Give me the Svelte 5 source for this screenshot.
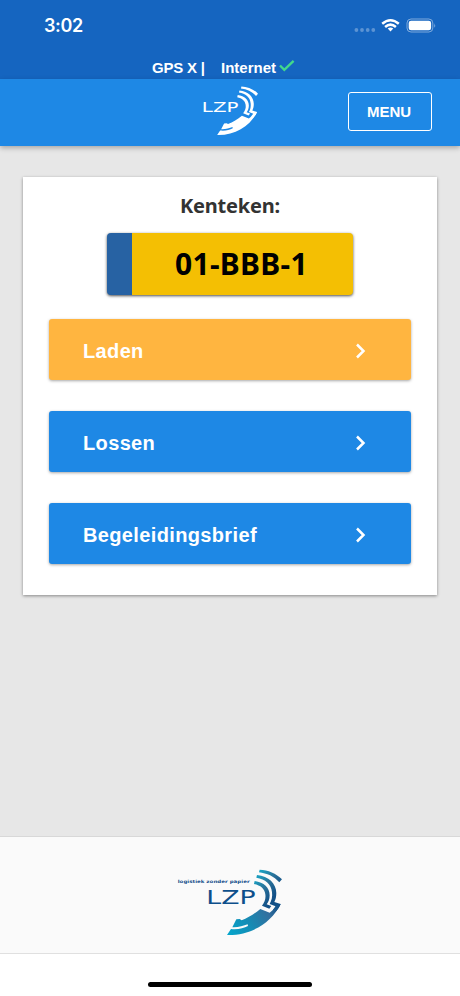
<script>
  const actions = [
    { label: 'Laden', tone: 'amber' },
    { label: 'Lossen', tone: 'blue' },
    { label: 'Begeleidingsbrief', tone: 'blue' }
  ];
</script>

{#snippet logo(full)}
  <svg class={full ? 'logo full' : 'logo white'} viewBox="36 40 318 202" role="img" aria-label="LZP">
    <defs>
      <linearGradient id="sea" gradientUnits="userSpaceOnUse" x1="190" y1="235" x2="345" y2="145">
        <stop offset="0" stop-color="#05a5cb" />
        <stop offset=".4" stop-color="#168bb4" />
        <stop offset=".75" stop-color="#336f9e" />
        <stop offset="1" stop-color="#0c4b83" />
      </linearGradient>
      <linearGradient id="arc" gradientUnits="userSpaceOnUse" x1="268" y1="60" x2="335" y2="110">
        <stop offset="0" stop-color="#16a8c8" />
        <stop offset=".55" stop-color="#2a7299" />
        <stop offset="1" stop-color="#125087" />
      </linearGradient>
    </defs>
    {#if full}
      <text class="tagline" x="38" y="82" textLength="216" lengthAdjust="spacingAndGlyphs">logistiek zonder papier</text>
    {/if}
    <text class="name" x="124" y="146" textLength="148" lengthAdjust="spacingAndGlyphs">LZP</text>
    <g fill={full ? 'url(#arc)' : '#fff'}>
      <path d="M284 42C309 43 334 53 351 71L343 80C327 62 306 53 282 50Z" />
      <path d="M276 58C311 61 334 84 334 112C334 123 332 132 328 139L347 145C344 154 338 162 332 168L324 162L332 152L314 145C320 135 323 123 321 109C319 85 301 70 274 66Z" />
      <path d="M269 76C297 80 314 96 314 119C314 131 310 140 305 146L319 151L313 159L291 150C299 140 303 130 301 116C299 99 287 89 267 85Z" />
    </g>
    <path
      fill={full ? 'url(#sea)' : '#fff'}
      d="M347 145C319 202 258 240 186 238L198 220C219 222 236 218 249 211L248 206C235 211 219 216 202 215L214 191L224 190L230 194C249 187 269 174 286 160L314 171C323 165 329 158 332 152L340 146Z"
    />
  </svg>
{/snippet}

<div class="screen">
  <div class="status">
    <div class="system">
      <span class="time">3:02</span>
      <svg class="indicators" viewBox="0 0 84 18" aria-hidden="true">
        <g fill="#fff" opacity=".3">
          <circle cx="4.4" cy="12" r="1.9" /><circle cx="10" cy="12" r="1.9" />
          <circle cx="15.7" cy="12" r="1.9" /><circle cx="21.3" cy="12" r="1.9" />
        </g>
        <g fill="none" stroke="#fff" stroke-width="2.5">
          <path d="M30.2 5.8Q38.5-1.4 46.8 5.8" />
          <path d="M33.1 9Q38.5 4.3 43.9 9" />
        </g>
        <path d="M35.7 10.5Q38.5 8.4 41.3 10.5L38.5 13.4Z" fill="#fff" />
        <rect x="55" y="1" width="25.8" height="13" rx="4" fill="none" stroke="#fff" stroke-opacity=".45" />
        <rect x="56.7" y="2.7" width="22.4" height="9.6" rx="2.4" fill="#fff" />
        <path d="M82.3 5.2Q84 7.5 82.3 9.8Z" fill="#fff" opacity=".5" />
      </svg>
    </div>
    <div class="connection">
      <span class="gps">GPS X |</span>
      <span class="net">Internet</span>
      <svg class="check" viewBox="0 0 16 13" aria-hidden="true">
        <path d="M1 5.5L5.3 9.8L14.6 .9" fill="none" stroke="#43d98b" stroke-width="2.3" />
      </svg>
    </div>
  </div>

  <header>
    {@render logo(false)}
    <button class="menu">MENU</button>
  </header>

  <main>
    <section class="card">
      <h1>Kenteken:</h1>
      <div class="plate"><span>01-BBB-1</span></div>
      {#each actions as action}
        <button class="action {action.tone}">
          <span>{action.label}</span>
          <svg viewBox="0 0 12 16" aria-hidden="true">
            <path d="M2 1.5L8.5 8L2 14.5" fill="none" stroke="#fff" stroke-width="2.5" />
          </svg>
        </button>
      {/each}
    </section>
  </main>

  <footer>{@render logo(true)}</footer>
  <div class="home"><span></span></div>
</div>

<style>
  .screen {
    width: 460px;
    height: 996px;
    display: flex;
    flex-direction: column;
    overflow: hidden;
    background: #e7e7e7;
    font-family: 'Liberation Sans', Arial, sans-serif;
  }
  button {
    border: 0;
    margin: 0;
    font-family: inherit;
    color: #fff;
  }
  .status {
    flex: none;
    height: 79px;
    box-sizing: border-box;
    background: #1565c0;
    color: #fff;
  }
  .system {
    height: 57px;
    box-sizing: border-box;
    padding: 15px 24px 0 44px;
    display: flex;
    justify-content: space-between;
    align-items: flex-start;
  }
  .time {
    font: 600 18px/22px Inter, sans-serif;
    letter-spacing: -0.35px;
  }
  .indicators {
    width: 84px;
    height: 18px;
    margin-top: 3px;
  }
  .connection {
    display: flex;
    height: 22px;
    padding-left: 152px;
    font-weight: 700;
    font-size: 15px;
    line-height: 22px;
  }
  .gps {
    width: 69px;
    letter-spacing: -0.2px;
  }
  .net {
    width: 58px;
  }
  .check {
    width: 16px;
    height: 13px;
    margin-top: 3px;
  }
  header {
    flex: none;
    height: 67px;
    box-sizing: border-box;
    display: flex;
    align-items: flex-start;
    justify-content: space-between;
    padding: 7px 28px 0 180px;
    background: #1e88e5;
    box-shadow: 0 2px 5px rgba(0, 0, 0, 0.28);
  }
  .logo {
    display: block;
    overflow: visible;
  }
  .white {
    width: 78.8px;
    height: 50px;
  }
  .full {
    width: 106px;
    height: 67.3px;
  }
  .name {
    font: 58px 'DejaVu Sans', sans-serif;
    fill: #0d4f8b;
  }
  .white .name {
    fill: #fff;
  }
  .tagline {
    font: 700 13px 'DejaVu Sans', sans-serif;
    fill: #17508c;
  }
  .menu {
    width: 84px;
    height: 39px;
    margin-top: 6px;
    padding: 0 2px 0 0;
    border: 1.5px solid #fff;
    border-radius: 3px;
    background: transparent;
    font-weight: 700;
    font-size: 15px;
  }
  main {
    flex: 1;
    padding: 31px 23px 0;
  }
  .card {
    height: 418px;
    box-sizing: border-box;
    padding: 15px 26px 0;
    display: flex;
    flex-direction: column;
    background: #fff;
    box-shadow: 0 1px 3px rgba(0, 0, 0, 0.42);
  }
  h1 {
    margin: 0;
    height: 42px;
    text-align: center;
    font: 700 20px/28px 'Noto Sans', sans-serif;
    letter-spacing: -0.2px;
    color: #333;
  }
  .plate {
    flex: none;
    align-self: center;
    width: 246px;
    height: 62px;
    box-sizing: border-box;
    margin-bottom: 24.5px;
    padding-right: 2px;
    border-left: 25px solid #2762a3;
    border-radius: 4px;
    background: #f4bf03;
    box-shadow: 0 1px 3px rgba(0, 0, 0, 0.7);
    text-align: center;
    color: #000;
    font: 700 30px/62px 'Noto Sans', sans-serif;
    letter-spacing: 0.3px;
  }
  .action {
    flex: none;
    display: flex;
    align-items: center;
    justify-content: space-between;
    height: 61px;
    margin-bottom: 31px;
    padding: 2px 44px 0 34px;
    border-radius: 3px;
    box-shadow: 0 1px 3px rgba(0, 0, 0, 0.35);
    font-weight: 700;
    font-size: 20px;
    letter-spacing: 0.36px;
  }
  .action span {
    padding-top: 1px;
  }
  .action svg {
    width: 12px;
    height: 16px;
  }
  .amber {
    background: #ffb540;
  }
  .blue {
    background: #1e88e5;
  }
  footer {
    flex: none;
    height: 118px;
    box-sizing: border-box;
    display: flex;
    justify-content: center;
    padding-top: 32px;
    background: #fafafa;
    border-top: 1px solid #d8d8d8;
    border-bottom: 1px solid #e0e0e0;
  }
  .home {
    flex: none;
    height: 42px;
    display: flex;
    justify-content: center;
    background: #fff;
  }
  .home span {
    width: 164px;
    height: 5px;
    margin-top: 27.5px;
    border-radius: 3px;
    background: #000;
  }
</style>
